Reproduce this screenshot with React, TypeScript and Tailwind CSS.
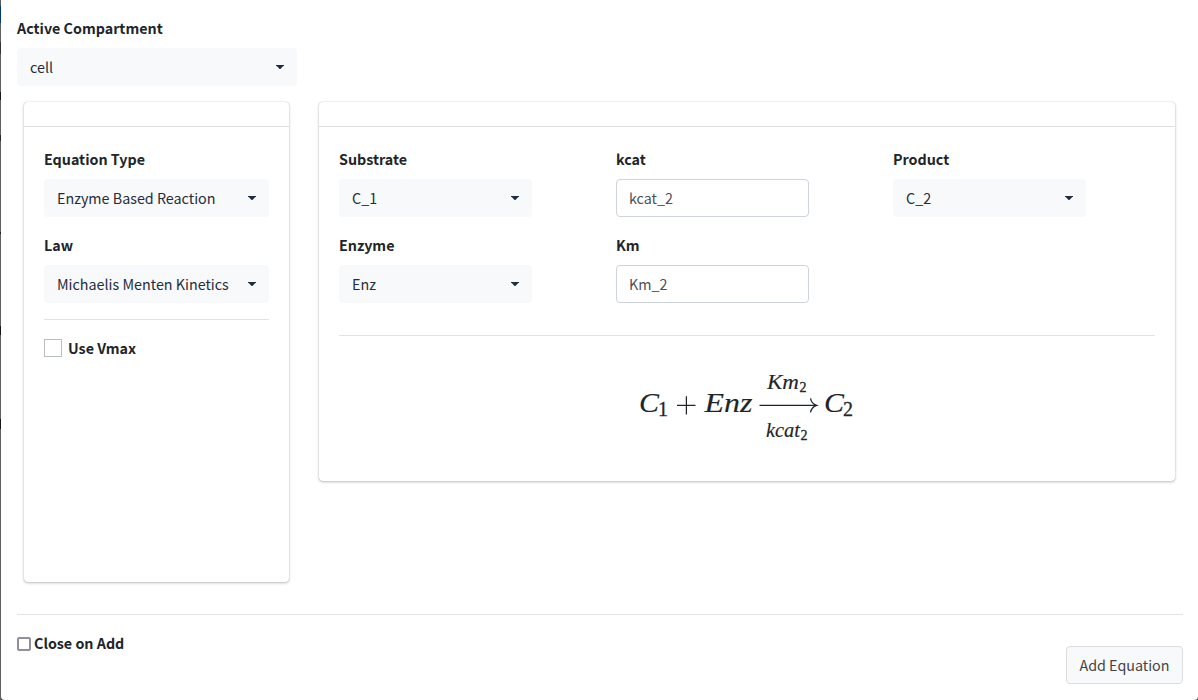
import type { ReactNode } from "react";

function Label({ children }: { children: ReactNode }) {
  return <div className="-mt-px h-6 text-[14.3px] leading-6 font-bold whitespace-nowrap text-[#212529]">{children}</div>;
}

function Select({ value }: { value: string }) {
  return (
    <button className="flex h-[38px] w-full items-center justify-between rounded bg-[#f8f9fa] px-[13px] text-left text-[14.32px] leading-6 whitespace-nowrap text-[#1f2d3d]">
      <span>{value}</span>
      <svg className="h-1 w-2" viewBox="0 0 8 4">
        <path d="M-0.3 0H8.3L4 4.4Z" fill="#1f2d3d" />
      </svg>
    </button>
  );
}

function Field({ label, children }: { label: string; children: ReactNode }) {
  return (
    <div className="flex flex-col gap-2">
      <Label>{label}</Label>
      {children}
    </div>
  );
}

function TextInput({ value }: { value: string }) {
  return (
    <input
      className="h-[38px] w-full rounded border border-[#ced4da] bg-white px-3 pb-0.5 text-[14.32px] leading-6 text-[#495057] outline-none"
      defaultValue={value}
    />
  );
}

function Card({ className, children }: { className: string; children: ReactNode }) {
  return (
    <section className={`rounded bg-white shadow-[0_0_1px_rgba(0,0,0,0.25),0_1px_3px_rgba(0,0,0,0.25)] ${className}`}>
      <div className="h-[25px] border-b border-[#dfdfdf]" />
      <div className="px-5 pt-[21px]">{children}</div>
    </section>
  );
}

function Equation() {
  return (
    <svg
      className="mx-auto block h-[80px] w-[220px] font-['Liberation_Serif',serif]"
      viewBox="637 366 220 80"
      fill="#212529"
      stroke="#212529"
      strokeWidth="0.15"
    >
      <g fontStyle="italic" fontSize="28">
        <text x="639" y="412" textLength="20" lengthAdjust="spacingAndGlyphs">C</text>
        <text x="704.5" y="412" textLength="48" lengthAdjust="spacingAndGlyphs">Enz</text>
        <text x="824" y="412" textLength="20" lengthAdjust="spacingAndGlyphs">C</text>
      </g>
      <g fontSize="20" strokeWidth="0.3">
        <text x="658" y="416">1</text>
        <text x="843" y="416">2</text>
      </g>
      <g fontStyle="italic" fontSize="20">
        <text x="767" y="389" textLength="32" lengthAdjust="spacingAndGlyphs">Km</text>
        <text x="766" y="437" textLength="34" lengthAdjust="spacingAndGlyphs">kcat</text>
      </g>
      <g fontSize="14" strokeWidth="0.3">
        <text x="799.5" y="392">2</text>
        <text x="800.5" y="440">2</text>
      </g>
      <path
        d="M677 405.4H695.5M686.4 396.2V414.4M759.5 405.4H816M810.5 398.4C811.2 402 813.5 404.4 816.7 405.4C813.5 406.4 811.2 408.8 810.5 412.4"
        fill="none"
        strokeWidth="1.25"
      />
    </svg>
  );
}

export default function App() {
  return (
    <div className="flex h-[700px] w-[1198px] overflow-hidden bg-[#58585a] font-['Noto_Sans_CJK_SC',sans-serif]">
      <div className="w-px shrink-0 bg-[linear-gradient(to_bottom,#58585a_0_6px,#003a70_6px_23px,#606062_23px_42px,#343436_42px_54px,#606062_54px_92px,#18181a_92px_100px,#606062_100px_135px,#29292b_135px_141px,#606062_141px_232px,#202022_232px_234px,#606062_234px_326px,#161618_326px_335px,#606062_335px_419px,#161618_419px_429px,#606062_429px)]" />
      <main className="min-w-0 grow rounded-b bg-white pt-[17px] pr-[15px] pl-4">
        <div className="w-[280px]">
          <Field label="Active Compartment">
            <Select value="cell" />
          </Field>
        </div>
        <div className="mt-4 ml-[7px] flex items-start gap-[30px]">
          <Card className="h-[480px] w-[265px]">
            <div className="flex flex-col gap-[17px]">
              <Field label="Equation Type">
                <Select value="Enzyme Based Reaction" />
              </Field>
              <Field label="Law">
                <Select value="Michaelis Menten Kinetics" />
              </Field>
            </div>
            <hr className="mt-4 border-[#e3e3e4]" />
            <label className="mt-4 flex h-6 items-center gap-[6px]">
              <input type="checkbox" className="size-[18px] appearance-none border border-[#b9bec3] bg-white" />
              <Label>Use Vmax</Label>
            </label>
          </Card>
          <Card className="h-[379px] w-[856px]">
            <div className="grid grid-cols-[193px_193px_193px] gap-x-[84px] gap-y-[17px]">
              <Field label="Substrate">
                <Select value="C_1" />
              </Field>
              <Field label="kcat">
                <TextInput value="kcat_2" />
              </Field>
              <Field label="Product">
                <Select value="C_2" />
              </Field>
              <Field label="Enzyme">
                <Select value="Enz" />
              </Field>
              <Field label="Km">
                <TextInput value="Km_2" />
              </Field>
            </div>
            <hr className="mt-8 mb-[30px] border-[#e3e3e4]" />
            <Equation />
          </Card>
        </div>
        <hr className="mt-8 border-[#e3e3e4]" />
        <footer className="flex justify-between pt-[17px]">
          <label className="flex h-6 items-start gap-[3px]">
            <input type="checkbox" className="mt-[5px] size-[14px] appearance-none rounded-[2px] border-2 border-[#8f8f9d] bg-white" />
            <Label>Close on Add</Label>
          </label>
          <button className="mt-[14px] h-[38px] w-[117px] rounded border border-[#dddddd] bg-[#f8f9fa] text-[14.32px] leading-6 whitespace-nowrap text-[#444444]">
            Add Equation
          </button>
        </footer>
      </main>
    </div>
  );
}
